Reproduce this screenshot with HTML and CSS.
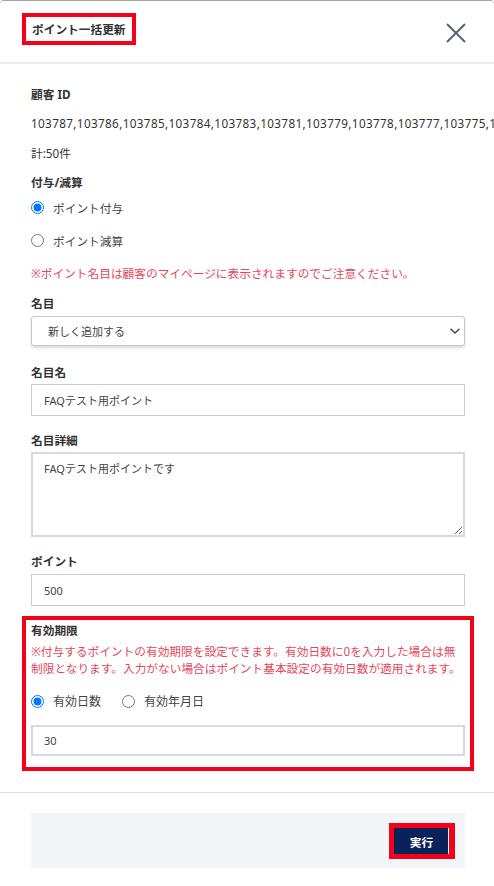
FILE: index.html
```html
<!DOCTYPE html>
<html lang="ja">
<head>
<meta charset="utf-8">
<title>ポイント一括更新</title>
<link rel="stylesheet" href="styles.css">
</head>
<body>
<div class="modal">
  <header class="modal-header">
    <h1 class="title"><span class="title-mark">ポイント一括更新</span></h1>
    <button class="close" aria-label="閉じる">
      <svg width="20" height="20" viewBox="0 0 20 20"><path d="M1 1 L19 19 M19 1 L1 19" stroke="#5b6272" stroke-width="2" fill="none"/></svg>
    </button>
  </header>
  <div class="modal-body">
    <p class="label">顧客 ID</p>
    <p class="text ids">103787,103786,103785,103784,103783,103781,103779,103778,103777,103775,103774,103773</p>
    <p class="text count">計:50件</p>
    <p class="label mt9">付与/減算</p>
    <label class="radio first"><input type="radio" name="kind" checked><span>ポイント付与</span></label>
    <label class="radio second"><input type="radio" name="kind"><span>ポイント減算</span></label>
    <p class="note">※ポイント名目は顧客のマイページに表示されますのでご注意ください。</p>
    <p class="label mt10">名目</p>
    <div class="select">
      <span>新しく追加する</span>
      <svg width="10" height="6" viewBox="0 0 10 6"><path d="M0.5 0.8 L5 5 L9.5 0.8" stroke="#444" stroke-width="1.3" fill="none"/></svg>
    </div>
    <p class="label mt16">名目名</p>
    <input class="input" type="text" value="FAQテスト用ポイント">
    <p class="label mt14">名目詳細</p>
    <textarea class="textarea">FAQテスト用ポイントです</textarea>
    <p class="label mt14">ポイント</p>
    <input class="input input-point" type="text" value="500">
    <section class="expiry">
      <p class="label">有効期限</p>
      <p class="note expiry-note">※付与するポイントの有効期限を設定できます。有効日数に0を入力した場合は無制限となります。入力がない場合はポイント基本設定の有効日数が適用されます。</p>
      <div class="radio-row">
        <label class="radio inline"><input type="radio" name="exp" checked><span>有効日数</span></label>
        <label class="radio inline"><input type="radio" name="exp"><span>有効年月日</span></label>
      </div>
      <input class="input input-thick" type="text" value="30">
    </section>
  </div>
  <footer class="modal-footer">
    <div class="footer-box">
      <button class="run">実行</button>
    </div>
  </footer>
</div>
</body>
</html>
```
FILE: styles.css
```css
* { box-sizing: border-box; }
html, body { margin: 0; padding: 0; background: #fff; }
body {
  font-family: "Noto Sans", "Noto Sans CJK JP", sans-serif;
  font-size: 11.7px;
  color: #333;
}
.modal {
  width: 494px;
  height: 886px;
  overflow: hidden;
  border-top: 1px solid #a3a3a3;
  border-radius: 4px 4px 0 0;
  background: #fff;
}
.modal-header {
  height: 63px;
  display: flex;
  justify-content: space-between;
  align-items: flex-start;
  padding: 12px 28px 0 22px;
  border-bottom: 2px solid #ececec;
}
.title { margin: 0; font-size: 11.7px; font-weight: 700; line-height: 16px; }
.title-mark {
  display: inline-block;
  border: 4px solid #f5001a;
  padding: 4px 6px;
  color: #333;
}
.close {
  margin-top: 10px;
  padding: 0;
  border: 0;
  background: none;
  width: 20px;
  height: 20px;
  display: block;
}
.close svg { display: block; }
.modal-body { padding: 20px 29px 21px 31px; }
p { margin: 0; }
.label { font-weight: 700; line-height: 20px; color: #333; }
.text { line-height: 20px; color: #333; }
.ids { margin-top: 9px; white-space: nowrap; letter-spacing: 0.37px; }
.count { margin-top: 10px; }
.mt9 { margin-top: 9px; }
.mt10 { margin-top: 10px; }
.mt14 { margin-top: 14px; }
.mt16 { margin-top: 16px; }
.radio {
  display: flex;
  align-items: center;
  gap: 9px;
  height: 20px;
  color: #444;
}
.radio input { margin: 0; width: 13px; height: 13px; }
.radio.first { margin-top: 5px; }
.radio.second { margin-top: 13px; }
.note { color: #e5475c; line-height: 20px; margin-top: 13px; }
.select {
  margin-top: 3px;
  height: 30px;
  border: 1px solid #c3c8d6;
  border-radius: 3px;
  box-shadow: 0 2px 3px rgba(0, 0, 0, 0.15);
  display: flex;
  align-items: center;
  justify-content: space-between;
  padding: 0 4px 0 16px;
  color: #444;
  font-size: 11px;
}
.select svg { display: block; }
.input {
  display: block;
  width: 100%;
  height: 32px;
  margin-top: 2px;
  border: 1px solid #c8ccd5;
  border-radius: 0;
  padding: 0 12px;
  font-family: inherit;
  font-size: 11px;
  color: #444;
  background: #fff;
  outline: none;
}
.textarea {
  display: block;
  width: 100%;
  height: 85px;
  margin-top: 2px;
  border: 2px solid #d6d9df;
  border-radius: 0;
  padding: 5px 11px;
  font-family: inherit;
  font-size: 11px;
  line-height: 20px;
  color: #444;
  resize: vertical;
  outline: none;
}
.input-point { margin-top: 3px; }
.expiry {
  margin: 10px -9px 0;
  border: 4px solid #f5001a;
  padding: 0 5px 11px;
}
.expiry-note { margin-top: 3px; line-height: 17px; }
.radio-row { display: flex; gap: 21px; margin-top: 14px; }
.radio.inline { display: inline-flex; font-size: 12px; }
.input-thick {
  margin-top: 14px;
  height: 31px;
  border: 2px solid #d6d9df;
  padding: 0 11px;
}
.modal-footer { border-top: 1px solid #e2e2e2; padding: 20px 29px 0 31px; }
.footer-box {
  height: 55px;
  background: #f3f6f8;
  display: flex;
  justify-content: flex-end;
  align-items: flex-start;
  padding: 10px 10px 0 0;
}
.run {
  width: 66px;
  height: 36px;
  border: 5px solid #f5001a;
  border-right-width: 6px;
  box-shadow: inset -1px 0 0 #fff;
  background: #0a2258;
  color: #fff;
  font-family: inherit;
  font-size: 11.7px;
  font-weight: 700;
  padding: 0;
  cursor: pointer;
}
```
